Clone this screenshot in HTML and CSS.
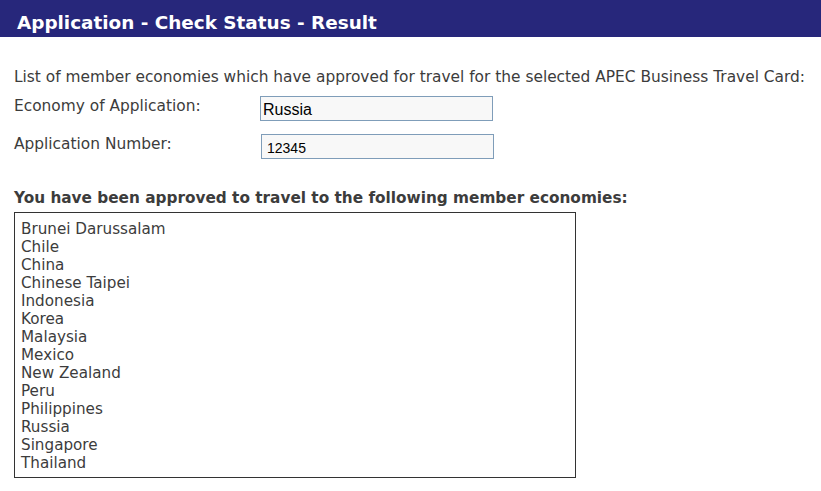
FILE: index.html
```html
<!DOCTYPE html>
<html>
<head>
<meta charset="utf-8">
<link rel="stylesheet" href="styles.css">
</head>
<body>
<div class="header"><h1 class="title">Application - Check Status - Result</h1></div>
<div class="content">
  <p class="intro">List of member economies which have approved for travel for the selected APEC Business Travel Card:</p>
  <div class="form">
    <div class="label">Economy of Application:</div>
    <div class="field"><input class="input input-economy" type="text" value="Russia"></div>
    <div class="label">Application Number:</div>
    <div class="field"><input class="input input-number" type="text" value="12345"></div>
  </div>
  <h2 class="subhead">You have been approved to travel to the following member economies:</h2>
  <div class="list">
    <div>Brunei Darussalam</div>
    <div>Chile</div>
    <div>China</div>
    <div>Chinese Taipei</div>
    <div>Indonesia</div>
    <div>Korea</div>
    <div>Malaysia</div>
    <div>Mexico</div>
    <div>New Zealand</div>
    <div>Peru</div>
    <div>Philippines</div>
    <div>Russia</div>
    <div>Singapore</div>
    <div>Thailand</div>
  </div>
</div>
</body>
</html>
```
FILE: styles.css
```css
html, body {
  margin: 0;
  padding: 0;
  background: #ffffff;
}
body {
  font-family: "DejaVu Sans", Verdana, sans-serif;
  color: #3c3c3c;
}
.header {
  background: #27277b;
  height: 37px;
  padding-left: 17px;
  display: flex;
  align-items: center;
}
.title {
  margin: 0;
  color: #ffffff;
  font-size: 18.4px;
  font-weight: bold;
  padding-top: 7px;
}
.content {
  padding-left: 14px;
}
.intro {
  margin: 0;
  padding-top: 31px;
  font-size: 15.4px;
  line-height: 18px;
  white-space: nowrap;
}
.form {
  display: grid;
  grid-template-columns: 246px 240px;
  grid-auto-rows: 25px;
  row-gap: 13px;
  margin-top: 10px;
}
.label {
  font-size: 15.4px;
  line-height: 18px;
  padding-top: 1px;
}
.field {
  display: flex;
}
.input {
  box-sizing: border-box;
  width: 233px;
  height: 25px;
  border: 1px solid #7f9db9;
  background: #f8f8f8;
  font-family: "Liberation Sans", Arial, sans-serif;
  color: #000;
  padding: 3px 3px 0 3px;
  margin: 0;
  outline: none;
}
.input-economy { font-size: 16px; padding-left: 2px; }
.input-number { font-size: 14px; margin-left: 1px; padding-left: 5px; }
.subhead {
  margin: 30px 0 0 0;
  font-size: 15.3px;
  line-height: 18px;
  font-weight: bold;
  white-space: nowrap;
}
.list {
  box-sizing: border-box;
  width: 562px;
  height: 266px;
  margin-top: 5px;
  border: 1px solid #333;
  padding: 7px 0 0 6px;
  font-size: 15.2px;
  line-height: 18px;
}
```
